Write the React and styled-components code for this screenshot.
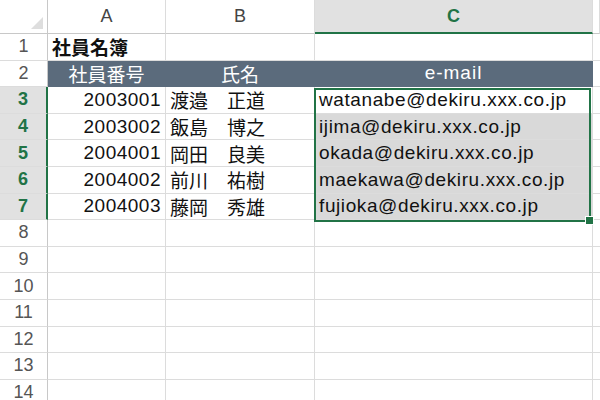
import React from 'react';
import styled, { createGlobalStyle } from 'styled-components';

const Global = createGlobalStyle`
  body { margin: 0; background: #fff; font-family: "Liberation Sans", "Noto Sans CJK JP", sans-serif; }
`;

const Sheet = styled.div`
  display: grid;
  grid-template-columns: 48px 118px 149px 278px 7px;
  grid-auto-rows: 26.6px;
  grid-template-rows: 34px;
  width: 600px;
  height: 400px;
  overflow: hidden;
  position: relative;
`;

const ColHead = styled.div`
  background: ${p => (p.$sel ? '#e1e1e1' : '#fff')};
  border-right: 1px solid #dcdcdc;
  border-bottom: ${p => (p.$sel ? '2px solid #217346' : '1px solid #c8c8c8')};
  color: ${p => (p.$sel ? '#217346' : '#444')};
  font-weight: ${p => (p.$sel ? 'bold' : 'normal')};
  font-size: 18px;
  display: flex;
  align-items: center;
  justify-content: center;
`;

const Corner = styled.div`
  border-right: 1px solid #c8c8c8;
  border-bottom: 1px solid #c8c8c8;
  position: relative;
  &::after {
    content: '';
    position: absolute;
    right: 4px;
    bottom: 4px;
    border-style: solid;
    border-width: 0 0 12px 12px;
    border-color: transparent transparent #dedede transparent;
  }
`;

const RowHead = styled.div`
  background: ${p => (p.$sel ? '#e1e1e1' : '#fff')};
  border-right: ${p => (p.$sel ? '2px solid #217346' : '1px solid #c8c8c8')};
  border-bottom: 1px solid #dcdcdc;
  color: ${p => (p.$sel ? '#217346' : '#555')};
  font-weight: ${p => (p.$sel ? 'bold' : 'normal')};
  font-size: 18px;
  display: flex;
  align-items: center;
  justify-content: center;
`;

const Cell = styled.div`
  border-right: 1px solid ${p => (p.$head ? '#5b6b7c' : '#dcdcdc')};
  border-bottom: 1px solid ${p => (p.$head ? '#5b6b7c' : '#dcdcdc')};
  background: ${p => (p.$head ? '#5b6b7c' : p.$gray ? '#d9d9d9' : '#fff')};
  color: ${p => (p.$head ? '#fff' : '#111')};
  font-size: 19px;
  letter-spacing: ${p => p.$spaced || '0'};
  font-weight: ${p => (p.$bold ? 'bold' : 'normal')};
  display: flex;
  align-items: center;
  justify-content: ${p => p.$align || 'flex-start'};
  padding: 0 4px;
  white-space: nowrap;
  overflow: visible;
`;

const Selection = styled.div`
  position: absolute;
  left: 314px;
  top: 87.5px;
  width: 277px;
  height: 134px;
  border: 2px solid #217346;
  box-sizing: border-box;
  pointer-events: none;
  &::after {
    content: '';
    position: absolute;
    right: -5px;
    bottom: -5px;
    width: 7px;
    height: 7px;
    background: #217346;
    border: 1px solid #fff;
  }
`;

const people = [
  ['2003001', '渡邉\u3000正道', 'watanabe@dekiru.xxx.co.jp'],
  ['2003002', '飯島\u3000博之', 'ijima@dekiru.xxx.co.jp'],
  ['2004001', '岡田\u3000良美', 'okada@dekiru.xxx.co.jp'],
  ['2004002', '前川\u3000祐樹', 'maekawa@dekiru.xxx.co.jp'],
  ['2004003', '藤岡\u3000秀雄', 'fujioka@dekiru.xxx.co.jp'],
];

export default function App() {
  const empty = [];
  for (let r = 8; r <= 15; r++) {
    empty.push(
      <React.Fragment key={r}>
        <RowHead>{r}</RowHead>
        <Cell /><Cell /><Cell /><Cell />
      </React.Fragment>
    );
  }
  return (
    <>
      <Global />
      <Sheet>
        <Corner />
        <ColHead>A</ColHead>
        <ColHead>B</ColHead>
        <ColHead $sel>C</ColHead>
        <ColHead />

        <RowHead>1</RowHead>
        <Cell $bold>社員名簿</Cell>
        <Cell /><Cell /><Cell />

        <RowHead>2</RowHead>
        <Cell $head $align="center">社員番号</Cell>
        <Cell $head $align="center">氏名</Cell>
        <Cell $head $align="center" $spaced="1px">e-mail</Cell>
        <Cell />

        {people.map((p, i) => (
          <React.Fragment key={p[0]}>
            <RowHead $sel>{i + 3}</RowHead>
            <Cell $align="flex-end" $spaced="0.5px">{p[0]}</Cell>
            <Cell>{p[1]}</Cell>
            <Cell $gray={i > 0} $spaced="0.6px">{p[2]}</Cell>
            <Cell />
          </React.Fragment>
        ))}
        {empty}
        <Selection />
      </Sheet>
    </>
  );
}
